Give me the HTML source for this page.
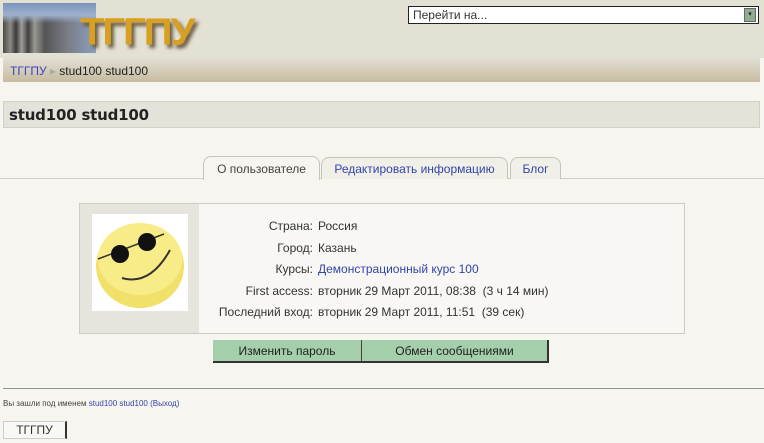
<!DOCTYPE html>
<html><head><meta charset="utf-8"><style>
*{margin:0;padding:0;box-sizing:border-box}
body{width:764px;height:443px;overflow:hidden;background:#f6f5f0;font-family:"Liberation Sans",Arial,sans-serif;font-size:12px;color:#222;position:relative}
.a{position:absolute}
a{color:#3344aa;text-decoration:none}
</style></head><body>
<div class="a" style="left:0;top:0;width:764px;height:58px;background:#e3e0d4"></div>
<div class="a" style="left:3px;top:3px;width:93px;height:50px;background:linear-gradient(90deg,#4a4a48 0,#8c8a86 8%,#3c3a38 14%,#a09e98 20%,#404040 27%,#9a9892 34%,#555 45%,#7a7e86 70%,#8aa0c0 100%)"></div>
<div class="a" style="left:3px;top:3px;width:93px;height:20px;background:linear-gradient(180deg,#7c94bc,#9fb0cc 60%,transparent)"></div>
<div class="a" style="left:80px;top:10px;font:bold 40px 'Liberation Sans',sans-serif;color:#d8a020;letter-spacing:-2px;text-shadow:3px 4px 4px #6a5a40;transform:scaleY(0.95)">ТГГПУ</div>
<div class="a" style="left:408px;top:6px;width:351px;height:18px;background:#fff;border:1px solid #222;font-size:12px;padding:1px 4px;color:#333">Перейти на...</div>
<div class="a" style="left:744px;top:8px;width:12px;height:14px;background:#8fae8f;border:1px solid #666;font-size:7px;text-align:center;line-height:12px">▾</div>
<div class="a" style="left:3px;top:58px;width:757px;height:24px;background:linear-gradient(180deg,#e2dfd4,#c7bba0)"></div>
<div class="a" style="left:10px;top:64px;font-size:12px"><a style="color:#3a44c0">ТГГПУ</a><span style="color:#aaa"> ▸ </span>stud100 stud100</div>
<div class="a" style="left:3px;top:101px;width:757px;height:27px;background:#e5e2d9;border:1px solid #d2cfc4"></div>
<div class="a" style="left:9px;top:106px;font-weight:bold;font-size:15px;font-family:'DejaVu Sans',sans-serif;letter-spacing:-0.2px">stud100 stud100</div>
<div class="a" style="left:0;top:178px;width:764px;height:1px;background:#cfcdc4"></div>
<div class="a" style="left:203px;top:156px;width:117px;height:24px;border:1px solid #c6c3b8;border-bottom:none;border-radius:8px 8px 0 0;background:#f6f5f0;text-align:center;line-height:24px;color:#444">О пользователе</div>
<div class="a" style="left:321px;top:157px;width:187px;height:22px;border:1px solid #c6c3b8;border-bottom:none;border-radius:8px 8px 0 0;background:#f0efe8;text-align:center;line-height:22px"><a>Редактировать информацию</a></div>
<div class="a" style="left:510px;top:157px;width:51px;height:22px;border:1px solid #c6c3b8;border-bottom:none;border-radius:8px 8px 0 0;background:#f0efe8;text-align:center;line-height:22px"><a>Блог</a></div>
<div class="a" style="left:79px;top:203px;width:606px;height:131px;border:1px solid #cfccc2;background:#f8f7f3"></div>
<div class="a" style="left:80px;top:204px;width:119px;height:129px;background:#e6e4dc"></div>
<div class="a" style="left:92px;top:214px;width:96px;height:97px;background:#fff">
<svg width="96" height="97" viewBox="0 0 96 97"><ellipse cx="48" cy="52" rx="44" ry="42" fill="#f1e16a"/><ellipse cx="48" cy="45" rx="42" ry="36" fill="#f7ec88"/><line x1="6" y1="45" x2="72" y2="20" stroke="#333" stroke-width="1.5"/><circle cx="28" cy="40" r="9" fill="#111"/><circle cx="55" cy="28" r="9" fill="#111"/><path d="M30 64 Q58 72 78 36" stroke="#333" stroke-width="2" fill="none"/></svg></div>
<div class="a" style="left:200px;top:216px;width:113px;text-align:right;line-height:21.5px;color:#333">Страна:<br>Город:<br>Курсы:<br>First access:<br>Последний вход:</div>
<div class="a" style="left:318px;top:216px;line-height:21.5px;color:#333">Россия<br>Казань<br><a>Демонстрационный курс 100</a><br>вторник 29 Март 2011, 08:38&nbsp; (3 ч 14 мин)<br>вторник 29 Март 2011, 11:51&nbsp; (39 сек)</div>
<div class="a" style="left:213px;top:340px;width:149px;height:23px;background:#a4cfaa;border-bottom:2px solid #333;border-right:1px solid #444;text-align:center;line-height:22px;color:#222">Изменить пароль</div>
<div class="a" style="left:362px;top:340px;width:187px;height:23px;background:#a4cfaa;border-bottom:2px solid #333;border-right:2px solid #333;text-align:center;line-height:22px;color:#222">Обмен сообщениями</div>
<div class="a" style="left:3px;top:388px;width:761px;height:1px;background:#8a9a8a"></div>
<div class="a" style="left:3px;top:399px;font-size:8px;color:#444">Вы зашли под именем <a>stud100 stud100</a> <a>(Выход)</a></div>
<div class="a" style="left:3px;top:421px;width:64px;height:18px;border:1px solid #ccc;border-right:2px solid #333;background:#f8f8f6;text-align:center;line-height:17px;font-size:12px;color:#333">ТГГПУ</div>
</body></html>
